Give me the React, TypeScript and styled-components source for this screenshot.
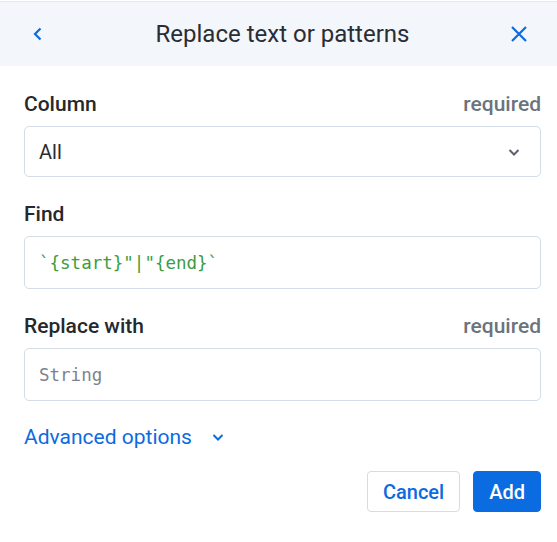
import React from "react";
import styled, { createGlobalStyle } from "styled-components";

const GlobalStyle = createGlobalStyle`
    html, body {
        margin: 0;
        padding: 0;
        background: #ffffff;
        font-family: Roboto, "Liberation Sans", sans-serif;
        color: #25282d;
    }
`;

const Panel = styled.div`
    width: 557px;
    height: 542px;
    background: #ffffff;
    display: flex;
    flex-direction: column;
`;

const Header = styled.header`
    height: 64px;
    margin-top: 1px;
    border-top: 1px solid #e3e8ef;
    background-color: #f3f6fb;
    display: grid;
    grid-template-columns: 76px 1fr 76px;
    align-items: center;
    h1 {
        margin: 0;
        padding-left: 8px;
        text-align: center;
        font-size: 24px;
        font-weight: 400;
        color: #2a2d33;
    }
`;

const IconButton = styled.button`
    background: none;
    border: none;
    padding: 0;
    cursor: pointer;
    display: flex;
    align-items: center;
    justify-content: center;
    color: #0b6be0;
`;

const Body = styled.div`
    padding: 24px 16px 0 24px;
    display: flex;
    flex-direction: column;
`;

const Field = styled.div`
    display: flex;
    flex-direction: column;
    margin-bottom: 23px;
`;

const LabelRow = styled.div`
    display: flex;
    justify-content: space-between;
    align-items: center;
    height: 28px;
    line-height: 28px;
    margin-bottom: 8px;
    label {
        font-size: 21px;
        font-weight: 500;
        color: #25282d;
    }
    span {
        font-size: 21px;
        font-weight: 500;
        color: #6c737c;
    }
`;

const Box = styled.div<{ $h: number }>`
    height: ${(p) => p.$h}px;
    box-sizing: border-box;
    border: 1px solid #d3dce7;
    border-radius: 5px;
    display: flex;
    align-items: center;
    justify-content: space-between;
    padding: 0 19px 0 14px;
`;

const SelectText = styled.span`
    font-size: 20px;
    color: #2a2d33;
`;

const Code = styled.span<{ $placeholder?: boolean }>`
    font-family: "DejaVu Sans Mono", "Liberation Mono", monospace;
    font-size: 17.5px;
    color: ${(p) => (p.$placeholder ? "#7d838b" : "#3d9c42")};
`;

const Advanced = styled.button`
    background: none;
    border: none;
    padding: 0;
    margin-top: 1px;
    height: 24px;
    line-height: 24px;
    align-self: flex-start;
    display: flex;
    align-items: center;
    gap: 19px;
    font-family: Roboto, "Liberation Sans", sans-serif;
    font-size: 21px;
    color: #0b6be0;
    cursor: pointer;
`;

const Actions = styled.div`
    display: flex;
    justify-content: flex-end;
    gap: 13px;
    margin-top: 22px;
`;

const Button = styled.button<{ $primary?: boolean }>`
    height: 41px;
    box-sizing: border-box;
    padding: 0 15px;
    border-radius: 4px;
    font-family: Roboto, "Liberation Sans", sans-serif;
    font-size: 20px;
    font-weight: 500;
    cursor: pointer;
    border: 1px solid ${(p) => (p.$primary ? "#0b6be0" : "#d3dce7")};
    background: ${(p) => (p.$primary ? "#0b6be0" : "#ffffff")};
    color: ${(p) => (p.$primary ? "#ffffff" : "#0b6be0")};
`;

const Chevron = ({ color, size = 14 }: { color: string; size?: number }) => (
    <svg width={size} height={size} viewBox="0 0 14 14" fill="none">
        <path d="M2.5 5l4.5 4.5L11.5 5" stroke={color} strokeWidth="2" />
    </svg>
);

const App = () => {
    return (
        <Panel>
            <GlobalStyle />
            <Header>
                <IconButton aria-label="Back">
                    <svg width="14" height="16" viewBox="0 0 14 16" fill="none">
                        <path d="M9.5 2.5L4 8l5.5 5.5" stroke="#0b6be0" strokeWidth="2.2" />
                    </svg>
                </IconButton>
                <h1>Replace text or patterns</h1>
                <IconButton aria-label="Close">
                    <svg width="18" height="18" viewBox="0 0 18 18" fill="none">
                        <path d="M2 2l14 14M16 2L2 16" stroke="#0b6be0" strokeWidth="2.2" />
                    </svg>
                </IconButton>
            </Header>
            <Body>
                <Field>
                    <LabelRow>
                        <label>Column</label>
                        <span>required</span>
                    </LabelRow>
                    <Box $h={51}>
                        <SelectText>All</SelectText>
                        <Chevron color="#5c636c" />
                    </Box>
                </Field>
                <Field>
                    <LabelRow>
                        <label>Find</label>
                    </LabelRow>
                    <Box $h={53}>
                        <Code>`{"{start}"}"|"{"{end}"}`</Code>
                    </Box>
                </Field>
                <Field>
                    <LabelRow>
                        <label>Replace with</label>
                        <span>required</span>
                    </LabelRow>
                    <Box $h={53}>
                        <Code $placeholder>String</Code>
                    </Box>
                </Field>
                <Advanced>
                    Advanced options
                    <Chevron color="#0b6be0" />
                </Advanced>
                <Actions>
                    <Button>Cancel</Button>
                    <Button $primary>Add</Button>
                </Actions>
            </Body>
        </Panel>
    );
};

export default App;
